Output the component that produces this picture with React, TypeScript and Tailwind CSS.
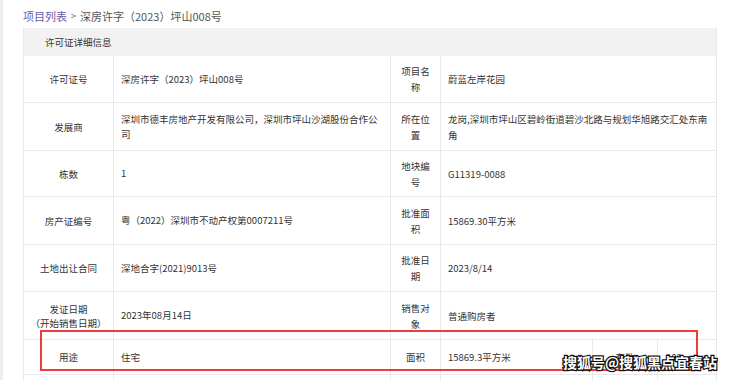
import React from "react"

type Row = {
    label: React.ReactNode
    value: React.ReactNode
    label2: React.ReactNode
    value2: React.ReactNode
    h: string
}

const rows: Row[] = [
    { label: "许可证号", value: "深房许字（2023）坪山008号", label2: "项目名称", value2: "蔚蓝左岸花园", h: "h-[47px]" },
    {
        label: "发展商",
        value: "深圳市德丰房地产开发有限公司，深圳市坪山沙湖股份合作公司",
        label2: "所在位置",
        value2: "龙岗,深圳市坪山区碧岭街道碧沙北路与规划华旭路交汇处东南角",
        h: "h-[48px]",
    },
    { label: "栋数", value: "1", label2: "地块编号", value2: "G11319-0088", h: "h-[46px]" },
    { label: "房产证编号", value: "粤（2022）深圳市不动产权第0007211号", label2: "批准面积", value2: "15869.30平方米", h: "h-[48px]" },
    { label: "土地出让合同", value: "深地合字(2021)9013号", label2: "批准日期", value2: "2023/8/14", h: "h-[47px]" },
    {
        label: (
            <>
                发证日期
                <br />
                （开始销售日期）
            </>
        ),
        value: "2023年08月14日",
        label2: "销售对象",
        value2: "普通购房者",
        h: "h-[48px]",
    },
]

const TableRow = ({ row }: { row: Row }) => (
    <div className={`flex border-b border-[#e9e9e9] ${row.h}`}>
        <div className="w-[90px] shrink-0 border-r border-[#e9e9e9] flex items-center justify-center text-center leading-[14px]">
            {row.label}
        </div>
        <div className="w-[277px] shrink-0 border-r border-[#e9e9e9] flex items-center px-[7px]">
            {row.value}
        </div>
        <div className="w-[50px] shrink-0 border-r border-[#e9e9e9] flex items-center justify-center text-center px-[7px] leading-[16px]">
            {row.label2}
        </div>
        <div className="flex-1 flex items-center pl-[7px] pr-[4px] leading-[16px]">
            {row.value2}
        </div>
    </div>
)

export default function App() {
    return (
        <div className="relative flex w-[740px] h-[380px] overflow-hidden bg-white font-['Noto_Sans_CJK_SC',sans-serif] text-[#333]">
            <div className="w-[3px] shrink-0 bg-[#eceef4]" />
            <div className="pl-[20px] pt-[4px]">
                <div className="h-[24px] flex items-center text-[11px] text-[#555]">
                    <span className="text-[#6b5ca5]">项目列表</span>
                    <span className="mx-[4px] text-[9px]">&gt;</span>
                    <span>深房许字（2023）坪山008号</span>
                </div>
                <div className="w-[694px] border-l border-r border-[#e9e9e9] text-[9.5px]">
                    <div className="h-[28px] flex items-center bg-[#f2f2f2] pl-[21px]">
                        许可证详细信息
                    </div>
                    {rows.map((row, i) => (
                        <TableRow key={i} row={row} />
                    ))}
                    <div className="flex h-[35px] border-b border-[#e9e9e9]">
                        <div className="w-[90px] shrink-0 border-r border-[#e9e9e9] flex items-center justify-center">
                            用途
                        </div>
                        <div className="w-[277px] shrink-0 border-r border-[#e9e9e9] flex items-center px-[7px]">
                            住宅
                        </div>
                        <div className="w-[50px] shrink-0 border-r border-[#e9e9e9] flex items-center justify-center">
                            面积
                        </div>
                        <div className="w-[152px] shrink-0 border-r border-[#e9e9e9] flex items-center px-[7px]">
                            15869.3平方米
                        </div>
                        <div className="w-[65px] shrink-0 border-r border-[#e9e9e9] flex items-center justify-center">
                            套数
                        </div>
                        <div className="flex-1 flex items-center px-[8px]">108</div>
                    </div>
                    <div className="flex h-[20px]">
                        <div className="w-[90px] shrink-0 border-r border-[#e9e9e9]" />
                        <div className="w-[277px] shrink-0 border-r border-[#e9e9e9]" />
                        <div className="w-[50px] shrink-0 border-r border-[#e9e9e9]" />
                        <div className="w-[152px] shrink-0 border-r border-[#e9e9e9]" />
                        <div className="w-[65px] shrink-0 border-r border-[#e9e9e9]" />
                        <div className="flex-1" />
                    </div>
                </div>
            </div>

            {/* highlight box */}
            <div className="absolute left-[40px] top-[330px] w-[658px] h-[41px] border-2 border-[#ee3b3b]" />

            {/* watermark over the page */}
            <div className="absolute left-[563px] top-[352px] text-[14px] font-semibold text-white [-webkit-text-stroke:2.5px_#111] [paint-order:stroke_fill]">
                搜狐号@搜狐黑点宜春站
            </div>
        </div>
    )
}
